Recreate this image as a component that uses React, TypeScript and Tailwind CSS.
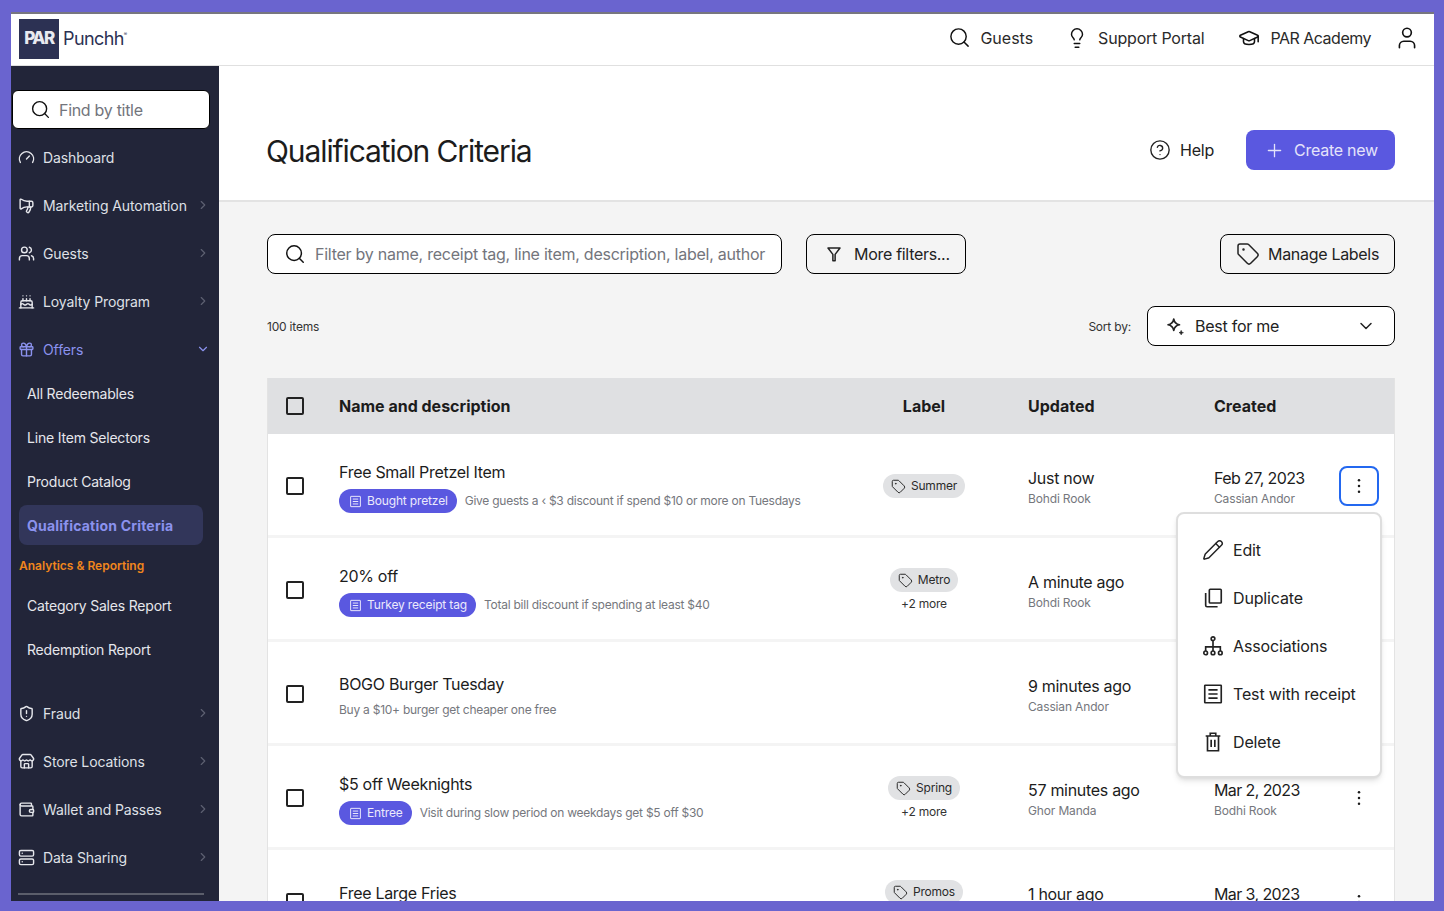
import {
  Cake,
  ChevronDown,
  ChevronRight,
  CircleHelp,
  Gift,
  GraduationCap,
  Lightbulb,
  Megaphone,
  Pencil,
  Plus,
  Search,
  Server,
  ShieldAlert,
  Store,
  Tag,
  User,
  Users,
  Wallet,
  Gauge,
} from "lucide-react";
import type { ReactNode } from "react";

function Funnel({ className }: { className?: string }) {
  return (
    <svg viewBox="0 0 24 24" fill="none" stroke="currentColor" strokeWidth="2" strokeLinejoin="round" className={className}>
      <path d="M4 4h16l-6.5 8.5V21h-3v-8.5z" />
    </svg>
  );
}

function Sparkle({ className }: { className?: string }) {
  return (
    <svg viewBox="0 0 24 24" fill="none" stroke="currentColor" strokeWidth="2" strokeLinejoin="round" className={className}>
      <path d="M10 3.5c.8 4.2 2.3 5.700 6.500 6.500-4.200.8-5.700 2.300-6.500 6.500-.8-4.200-2.300-5.700-6.500-6.500 4.200-.8 5.700-2.300 6.500-6.500z" />
      <path d="M18.500 16.500c.3 1.500.9 2.100 2.500 2.500-1.600.4-2.200 1-2.500 2.500-.3-1.500-.9-2.100-2.500-2.500 1.600-.4 2.200-1 2.500-2.500z" fill="currentColor" strokeWidth="0.8" />
    </svg>
  );
}

function Hierarchy({ className }: { className?: string }) {
  return (
    <svg viewBox="0 0 24 24" fill="none" stroke="currentColor" strokeWidth="1.8" className={className}>
      <circle cx="12" cy="4" r="2" />
      <circle cx="4" cy="19.500" r="2" />
      <circle cx="12" cy="19.500" r="2" />
      <circle cx="20" cy="19.500" r="2" />
      <path d="M12 6v11.500M4 17.500V13h16v4.500" />
    </svg>
  );
}

function Receipt({ className }: { className?: string }) {
  return (
    <svg viewBox="0 0 24 24" fill="none" stroke="currentColor" strokeWidth="1.800" className={className}>
      <rect x="3" y="2.500" width="18" height="19" rx="0.5" />
      <path d="M7 7.500h10M7 12h10M7 16.500h10" />
    </svg>
  );
}

function Duplicate({ className }: { className?: string }) {
  return (
    <svg viewBox="0 0 24 24" fill="none" stroke="currentColor" strokeWidth="1.800" className={className}>
      <rect x="8" y="2.500" width="13" height="15" rx="1" />
      <path d="M4 6.500V20a1.500 1.500 0 0 0 1.500 1.500H17" />
    </svg>
  );
}

function Bin({ className }: { className?: string }) {
  return (
    <svg viewBox="0 0 24 24" fill="none" stroke="currentColor" strokeWidth="1.800" className={className}>
      <path d="M4 5.500h16M9 5.500v-3h6v3M6 5.500V21.500h12V5.500M10 9.500v8M14 9.500v8" />
    </svg>
  );
}

function Dots({ className }: { className?: string }) {
  return (
    <svg viewBox="0 0 24 24" fill="currentColor" className={className}>
      <circle cx="12" cy="5" r="1.500" />
      <circle cx="12" cy="12" r="1.500" />
      <circle cx="12" cy="19" r="1.500" />
    </svg>
  );
}

function NavItem({ icon, label, arrow = true }: { icon: ReactNode; label: string; arrow?: boolean }) {
  return (
    <div className="flex h-12 items-center pr-[9px] pl-[8px] text-[14px] tracking-[-0.1px] text-[#dfe0e6]">
      <span className="flex w-[24px] shrink-0 items-center text-[#e6e7ec]">{icon}</span>
      <span className="flex-1">{label}</span>
      {arrow && <ChevronRight className="h-[14px] w-[14px] text-[#5d6071]" />}
    </div>
  );
}

function SubItem({ label }: { label: string }) {
  return <div className="flex h-11 items-center pl-[16px] text-[14px] tracking-[-0.2px] text-[#e6e7ec]">{label}</div>;
}

function Sidebar() {
  const icon = "h-[17px] w-[17px] -ml-px";
  return (
    <aside className="flex w-[208px] shrink-0 flex-col bg-[#222539] pt-[24px]">
      <div className="mr-[9px] ml-px flex h-[39px] items-center rounded-[6px] border border-black bg-white pl-[17px]">
        <Search className="h-[21px] w-[21px] text-[#111]" strokeWidth={1.6} />
        <span className="ml-[8px] text-[16px] tracking-[-0.3px] text-[#73757c]">Find by title</span>
      </div>
      <div className="mt-[4px]">
        <NavItem icon={<Gauge className={icon} />} label="Dashboard" arrow={false} />
        <NavItem icon={<Megaphone className={`${icon} -scale-x-100`} />} label="Marketing Automation" />
        <NavItem icon={<Users className={icon} />} label="Guests" />
        <NavItem icon={<Cake className={icon} />} label="Loyalty Program" />
        <div className="flex h-12 items-center pr-[9px] pl-[8px] text-[14px] tracking-[-0.1px] text-[#8b92ee]">
          <Gift className="mr-[8px] -ml-px h-[17px] w-[17px]" />
          <span className="flex-1">Offers</span>
          <ChevronDown className="h-[14px] w-[14px]" />
        </div>
      </div>
      <div className="-mt-0.5">
        <SubItem label="All Redeemables" />
        <SubItem label="Line Item Selectors" />
        <SubItem label="Product Catalog" />
        <div className="mx-[8px] mt-0.5 flex h-10 w-[184px] items-center rounded-[8px] bg-[#32365a] pl-[8px] text-[14px] font-bold tracking-[0.2px] text-[#8b92ee]">
          Qualification Criteria
        </div>
      </div>
      <div className="mt-[11px] h-5 pl-[8px] text-[12px] leading-5 font-semibold text-[#f0861d]">Analytics &amp; Reporting</div>
      <div className="mt-[7px]">
        <SubItem label="Category Sales Report" />
        <SubItem label="Redemption Report" />
      </div>
      <div className="mt-[18px]">
        <NavItem icon={<ShieldAlert className={icon} />} label="Fraud" />
        <NavItem icon={<Store className={icon} />} label="Store Locations" />
        <NavItem icon={<Wallet className={icon} />} label="Wallet and Passes" />
        <NavItem icon={<Server className={icon} />} label="Data Sharing" />
      </div>
      <div className="mt-[12px] mr-[15px] ml-[7px] h-0.5 bg-[#5b5e6b]" />
    </aside>
  );
}

function Header() {
  return (
    <header className="flex h-[52px] shrink-0 items-center border-b border-[#e0e0e0] bg-white pr-[14px] pb-[2px] pl-[8px]">
      <div className="flex h-10 w-10 items-center justify-center bg-[#2c3153] text-[17px] font-extrabold tracking-[-1.5px] text-[#e8e9f0]">PAR</div>
      <span className="ml-[4px] text-[18px] tracking-[-0.6px] text-[#2c3153]">Punchh</span>
      <span className="mb-2 text-[5px] text-[#2c3153]">®</span>
      <div className="mb-[2px] ml-auto flex items-center text-[16px] text-[#2a2a2a]">
        <Search className="h-[23px] w-[23px] text-[#111]" strokeWidth={1.5} />
        <span className="ml-[9px]">Guests</span>
        <Lightbulb className="ml-[33px] h-[22px] w-[22px] text-[#111]" strokeWidth={1.6} />
        <span className="ml-[10px] tracking-[-0.2px]">Support Portal</span>
        <GraduationCap className="ml-[34px] h-[22px] w-[22px] text-[#111]" strokeWidth={1.7} />
        <span className="ml-[10px] tracking-[-0.5px]">PAR Academy</span>
        <User className="ml-[23px] h-[26px] w-[26px] text-[#111]" strokeWidth={1.5} />
      </div>
    </header>
  );
}

type RowData = {
  title: string;
  tag?: string;
  desc?: string;
  label?: string;
  more?: boolean;
  updated: string;
  updatedBy: string;
  created?: string;
  createdBy?: string;
  active?: boolean;
};

const rows: RowData[] = [
  {
    title: "Free Small Pretzel Item",
    tag: "Bought pretzel",
    desc: "Give guests a ‹ $3 discount if spend $10 or more on Tuesdays",
    label: "Summer",
    updated: "Just now",
    updatedBy: "Bohdi Rook",
    created: "Feb 27, 2023",
    createdBy: "Cassian Andor",
    active: true,
  },
  {
    title: "20% off",
    tag: "Turkey receipt tag",
    desc: "Total bill discount if spending at least $40",
    label: "Metro",
    more: true,
    updated: "A minute ago",
    updatedBy: "Bohdi Rook",
  },
  {
    title: "BOGO Burger Tuesday",
    desc: "Buy a $10+ burger get cheaper one free",
    updated: "9 minutes ago",
    updatedBy: "Cassian Andor",
  },
  {
    title: "$5 off Weeknights",
    tag: "Entree",
    desc: "Visit during slow period on weekdays get $5 off $30",
    label: "Spring",
    more: true,
    updated: "57 minutes ago",
    updatedBy: "Ghor Manda",
    created: "Mar 2, 2023",
    createdBy: "Bodhi Rook",
  },
  {
    title: "Free Large Fries",
    label: "Promos",
    more: true,
    updated: "1 hour ago",
    updatedBy: "Ghor Manda",
    created: "Mar 3, 2023",
    createdBy: "Bodhi Rook",
  },
];

const menuIcon = "-ml-[2px] h-[22px] w-[22px]";

const menuItems = [
  { label: "Edit", icon: <Pencil className={menuIcon} strokeWidth={1.6} /> },
  { label: "Duplicate", icon: <Duplicate className={menuIcon} /> },
  { label: "Associations", icon: <Hierarchy className={menuIcon} /> },
  { label: "Test with receipt", icon: <Receipt className={menuIcon} /> },
  { label: "Delete", icon: <Bin className={menuIcon} /> },
];

function RowMenu() {
  return (
    <div className="absolute top-[46px] right-[-3px] z-10 h-[266px] w-[206px] rounded-[8px] border-2 border-[#dedede] bg-white pt-[12px] shadow-md">
      {menuItems.map((item) => (
        <div key={item.label} className="flex h-12 items-center pl-[26px] text-[16px] tracking-[-0.15px] text-[#222]">
          <span className="flex w-[29px] shrink-0 items-center">{item.icon}</span>
          {item.label}
        </div>
      ))}
    </div>
  );
}

const gridCols = "grid grid-cols-[71px_541px_88px_246px_125px_40px] items-center";

function Row({ row }: { row: RowData }) {
  return (
    <div className={`${gridCols} h-[104px] shrink-0 border-b-[3px] border-[#f4f4f4] pt-[3px]`}>
      <div className="flex pl-[18px]">
        <span className="h-[18px] w-[18px] rounded-[2px] border-2 border-[#222]" />
      </div>
      <div className={row.tag ? "pt-[3px]" : "pt-[4px]"}>
        <div className="text-[16px] leading-5 tracking-[-0.3px] text-[#1c1c1c]">{row.title}</div>
        <div className="mt-[7px] flex min-h-4 items-center">
          {row.tag && (
            <span className="mr-[8px] flex h-6 items-center rounded-full bg-[#5a58e0] pr-[9px] pl-[10px] text-[12px] tracking-[-0.15px] text-[#eceafc]">
              <Receipt className="mr-[5px] h-[13px] w-[13px]" />
              {row.tag}
            </span>
          )}
          <span className="text-[12px] tracking-[-0.25px] text-[#75777d]">{row.desc}</span>
        </div>
      </div>
      <div className="flex flex-col items-center">
        {row.label && (
          <span className="flex h-6 items-center rounded-full bg-[#e1e2e4] px-[8px] text-[12px] tracking-[-0.2px] text-[#2a2a2a]">
            <Tag className="mr-[5px] h-[15px] w-[15px]" strokeWidth={1.6} />
            {row.label}
          </span>
        )}
        {row.more && <span className="mt-[4px] text-[12px] leading-4 tracking-[-0.2px] text-[#333]">+2 more</span>}
      </div>
      <div className="pt-[3px] pl-[60px]">
        <div className="text-[16px] leading-5 tracking-[-0.3px] text-[#1c1c1c]">{row.updated}</div>
        <div className="mt-[3px] text-[12px] leading-4 tracking-[-0.15px] text-[#75777d]">{row.updatedBy}</div>
      </div>
      <div className="pt-[3px]">
        <div className="min-h-5 text-[16px] leading-5 tracking-[-0.6px] text-[#1c1c1c]">{row.created}</div>
        <div className="mt-[3px] min-h-4 text-[12px] leading-4 tracking-[-0.15px] text-[#75777d]">{row.createdBy}</div>
      </div>
      <div className="relative">
        <div className={`flex h-10 w-10 items-center justify-center rounded-[8px] ${row.active ? "border-2 border-[#2368f0]" : ""}`}>
          <Dots className="h-5 w-5 text-[#1c1c1c]" />
        </div>
        {row.active && <RowMenu />}
      </div>
    </div>
  );
}

export default function App() {
  return (
    <div className="h-[911px] overflow-hidden bg-[#6a64cf] pt-[12px] pr-[10px] pb-[10px] pl-[11px] font-[family-name:Inter,sans-serif]">
      <div className="flex h-full flex-col overflow-hidden border-t-2 border-[#77767f] bg-[#f4f4f4]">
        <Header />
        <div className="flex min-h-0 flex-1">
          <Sidebar />
          <main className="min-w-0 flex-1">
            <div className="flex h-[136px] items-center border-b-2 border-[#e3e3e3] bg-white pt-[34px] pr-[39px] pl-[48px]">
              <h1 className="mt-[2px] -ml-px text-[30px] tracking-[-1.1px] text-[#1c1c1c]">Qualification Criteria</h1>
              <div className="ml-auto flex items-center text-[16px] tracking-[-0.25px] text-[#222]">
                <CircleHelp className="h-[22px] w-[22px]" strokeWidth={1.5} />
                <span className="ml-[9px]">Help</span>
              </div>
              <div className="ml-[32px] flex h-10 w-[149px] items-center rounded-[8px] bg-[#5a58e0] pl-[18px] text-[16px] tracking-[-0.25px] text-[#e4e3fa]">
                <Plus className="mr-[9px] h-[21px] w-[21px]" strokeWidth={1.5} />
                Create new
              </div>
            </div>

            <div className="pt-[32px] pr-[39px] pl-[48px]">
              <div className="flex items-center">
                <div className="flex h-10 w-[515px] items-center rounded-[8px] border border-black bg-white pl-[16px]">
                  <Search className="h-[22px] w-[22px] text-[#111]" strokeWidth={1.6} />
                  <span className="ml-[9px] text-[16px] tracking-[-0.25px] whitespace-nowrap text-[#73757c]">
                    Filter by name, receipt tag, line item, description, label, author
                  </span>
                </div>
                <div className="ml-[24px] flex h-10 w-[160px] items-center rounded-[8px] border border-black pl-[18px] text-[16px] tracking-[-0.3px] text-[#222]">
                  <Funnel className="mr-[11px] h-[18px] w-[18px]" />
                  More filters...
                </div>
                <div className="ml-auto flex h-10 w-[175px] items-center rounded-[8px] border border-black pl-[15px] text-[16px] tracking-[-0.3px] text-[#222]">
                  <Tag className="mr-[8px] h-[24px] w-[24px]" strokeWidth={1.5} />
                  Manage Labels
                </div>
              </div>

              <div className="mt-[32px] flex h-10 items-center">
                <span className="mt-0.5 text-[12px] tracking-[-0.2px] text-[#333]">100 items</span>
                <span className="mt-0.5 ml-auto text-[12px] tracking-[-0.2px] text-[#333]">Sort by:</span>
                <div className="ml-[16px] flex h-10 w-[248px] items-center rounded-[8px] border border-black bg-white pr-[18px] pl-[17px] text-[16px] tracking-[-0.25px] text-[#222]">
                  <Sparkle className="mr-[9px] h-[21px] w-[21px]" />
                  <span className="flex-1">Best for me</span>
                  <ChevronDown className="h-[20px] w-[20px]" strokeWidth={1.8} />
                </div>
              </div>

              <div className="mt-[32px] flex flex-col border-x border-[#e3e3e3] bg-white">
                <div className={`${gridCols} h-14 bg-[#dfe0e2] text-[16px] font-bold text-[#1c1c1c]`}>
                  <div className="flex pl-[18px]">
                    <span className="h-[18px] w-[18px] rounded-[2px] border-2 border-[#222]" />
                  </div>
                  <div>Name and description</div>
                  <div className="text-center">Label</div>
                  <div className="pl-[60px]">Updated</div>
                  <div>Created</div>
                  <div />
                </div>
                {rows.map((row) => (
                  <Row key={row.title} row={row} />
                ))}
              </div>
            </div>
          </main>
        </div>
      </div>
    </div>
  );
}
